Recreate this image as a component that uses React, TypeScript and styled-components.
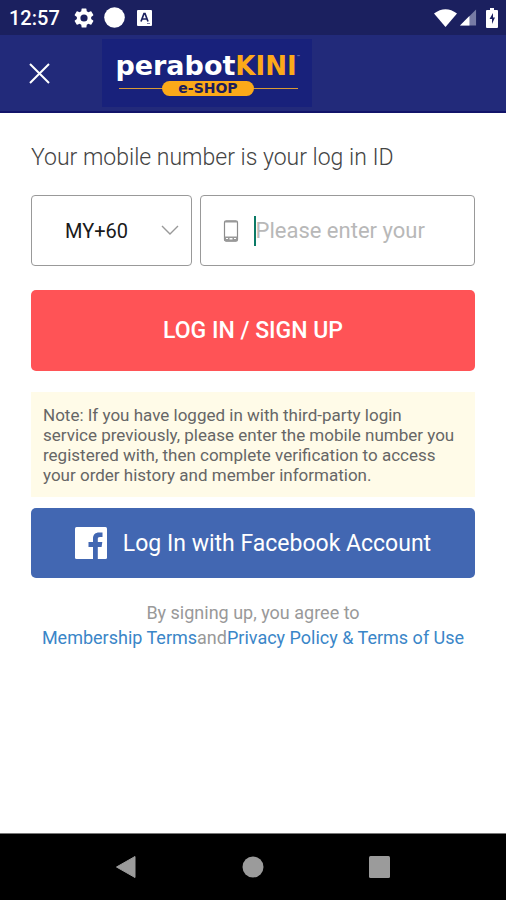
import React from "react";
import styled, { createGlobalStyle } from "styled-components";

const GlobalStyle = createGlobalStyle`
  *, *::before, *::after { box-sizing: border-box; }
  body { margin: 0; background: #fff; font-family: Roboto, "Liberation Sans", sans-serif; }
  button, input, select { font-family: inherit; }
`;

const Screen = styled.div`
  display: flex;
  flex-direction: column;
  min-height: 100vh;
`;

const StatusBar = styled.div`
  display: flex;
  align-items: center;
  justify-content: space-between;
  height: 35px;
  padding: 0 8px 0 9px;
  background: #1b205f;
  color: #fff;
`;

const StatusGroup = styled.div<{ $gap: number }>`
  display: flex;
  align-items: center;
  gap: ${(p) => p.$gap}px;
`;

const Clock = styled.time`
  margin-right: 4px;
  font-size: 20px;
  font-weight: 500;
  line-height: 24px;
`;

const SignalIcon = styled.svg`
  margin-right: 6px;
`;

const Header = styled.header`
  display: flex;
  align-items: center;
  height: 78px;
  padding-left: 24px;
  gap: 47px;
  background: #222a7a;
  border-bottom: 2px solid #12146a;
`;

const CloseButton = styled.button`
  display: flex;
  align-items: center;
  justify-content: center;
  width: 31px;
  height: 32px;
  padding: 0;
  border: 0;
  background: none;
  color: #fff;
`;

const Logo = styled.div`
  display: flex;
  flex-direction: column;
  align-items: center;
  width: 210px;
  height: 68px;
  padding: 12px 0 0 2px;
  background: #18217b;
  font-family: "DejaVu Sans", sans-serif;
  font-weight: 700;
`;

const WordMark = styled.div`
  display: flex;
  align-items: baseline;
  color: #fff;
  font-size: 27px;
  line-height: 30px;
`;

const WordAccent = styled.span`
  color: #fba919;
  font-size: 26px;
`;

const TradeMark = styled.sup`
  align-self: flex-start;
  color: #8e95c8;
  font-size: 4px;
  line-height: 12px;
`;

const TagLine = styled.div`
  display: flex;
  align-items: center;
  width: 179px;

  &::before,
  &::after {
    content: "";
    flex: 1;
    height: 1px;
    background: #d99a35;
  }
`;

const Tag = styled.span`
  padding: 0 16px;
  border-radius: 8px;
  background: #fba919;
  color: #1c1c5c;
  font-size: 14px;
  line-height: 15px;
`;

const Main = styled.main`
  flex: 1;
  padding: 30px 31px 0;
`;

const Title = styled.h1`
  margin: 0 0 23px;
  color: #444;
  font-size: 23px;
  font-weight: 300;
  line-height: 29px;
`;

const FieldRow = styled.div`
  display: flex;
  gap: 8px;
  margin-bottom: 24px;
`;

const Field = styled.div<{ $grow: number }>`
  position: relative;
  display: flex;
  align-items: center;
  flex: ${(p) => p.$grow} 1 0;
  min-width: 0;
  height: 71px;
  border: 1px solid #999;
  border-radius: 4px;
`;

const CodeSelect = styled.select`
  width: 100%;
  height: 100%;
  padding: 0 40px 0 33px;
  border: 0;
  outline: 0;
  appearance: none;
  background: none;
  color: #1a1a1a;
  font-size: 20px;
`;

const Chevron = styled.svg`
  position: absolute;
  right: 12px;
  pointer-events: none;
`;

const PhoneIcon = styled.svg`
  flex: none;
  margin: 0 15px 0 22px;
`;

const Caret = styled.span`
  flex: none;
  width: 2px;
  height: 30px;
  background: #0b7a66;
`;

const PhoneInput = styled.input`
  flex: 1;
  min-width: 0;
  height: 100%;
  margin-right: 20px;
  padding: 0;
  border: 0;
  outline: 0;
  background: none;
  color: #1a1a1a;
  font-size: 22px;

  &::placeholder { color: #b8b8b8; opacity: 1; }
`;

const ActionButton = styled.button<{ $tone: "login" | "facebook" }>`
  display: flex;
  align-items: center;
  justify-content: center;
  gap: 16px;
  width: 100%;
  height: ${(p) => (p.$tone === "login" ? 81 : 70)}px;
  padding: 0;
  border: 0;
  border-radius: 5px;
  background: ${(p) => (p.$tone === "login" ? "#ff5356" : "#4267b2")};
  color: #fff;
  font-size: 23px;
  font-weight: ${(p) => (p.$tone === "login" ? 500 : 400)};
`;

const Note = styled.p`
  margin: 21px 0 11px;
  padding: 13px 18px 12px 12px;
  background: #fffbe8;
  color: #666;
  font-size: 17px;
  line-height: 20px;
`;

const Terms = styled.p`
  margin: 22px 0 0;
  color: #999;
  font-size: 18px;
  line-height: 25px;
  text-align: center;
`;

const TermsLine = styled.span`
  display: block;
  white-space: nowrap;
`;

const TermsLink = styled.a`
  color: #3a86c8;
  text-decoration: none;
`;

const NavBar = styled.nav`
  display: flex;
  align-items: center;
  justify-content: center;
  gap: 95px;
  height: 67px;
  border-top: 1px solid #777;
  background: #000;
`;

const NavButton = styled.button`
  display: flex;
  width: 32px;
  height: 32px;
  padding: 4px;
  border: 0;
  background: none;
  color: #9b9b9b;
`;

export default function App() {
  return (
    <>
      <GlobalStyle />
      <Screen>
        <StatusBar>
          <StatusGroup $gap={10}>
            <Clock>12:57</Clock>
            <svg width="20" height="20" viewBox="2 2 20 20" fill="currentColor" aria-hidden="true">
              <path d="M19.14 12.94c.04-.3.06-.61.06-.94s-.02-.64-.07-.94l2.03-1.58a.49.49 0 0 0 .12-.61l-1.92-3.32a.49.49 0 0 0-.59-.22l-2.39.96a7 7 0 0 0-1.62-.94l-.36-2.54a.48.48 0 0 0-.48-.41h-3.84a.48.48 0 0 0-.47.41l-.36 2.54c-.59.24-1.13.57-1.62.94l-2.39-.96a.48.48 0 0 0-.59.22L2.74 8.87a.48.48 0 0 0 .12.61l2.03 1.58a7 7 0 0 0 0 1.88l-2.03 1.58a.49.49 0 0 0-.12.61l1.92 3.32c.12.22.37.29.59.22l2.39-.96c.5.38 1.03.7 1.62.94l.36 2.54c.05.24.24.41.48.41h3.84c.24 0 .44-.17.47-.41l.36-2.54a7 7 0 0 0 1.62-.94l2.39.96c.22.08.47 0 .59-.22l1.92-3.32a.48.48 0 0 0-.12-.61zM12 15.6a3.6 3.6 0 1 1 0-7.2 3.6 3.6 0 0 1 0 7.2z" />
            </svg>
            <svg width="21" height="21" viewBox="0 0 21 21" aria-hidden="true">
              <circle cx="10.500" cy="10.500" r="10.300" fill="currentColor" />
            </svg>
            <svg width="19" height="18" viewBox="0 0 19 18" aria-hidden="true">
              <rect x="2" y="1" width="15" height="16" rx="1" fill="#fff" />
              <path d="M6 12.500 9 4.500h1l3 8M7 10h5" fill="none" stroke="#1b205f" strokeWidth="1.700" />
              <path d="M12 14.500h3" stroke="#7d80a5" />
            </svg>
          </StatusGroup>
          <StatusGroup $gap={3}>
            <svg width="23" height="18" viewBox="0 0 23 18" aria-hidden="true">
              <path d="M0 4.500Q11.500-4 23 4.500L11.500 18Z" fill="#fff" />
            </svg>
            <SignalIcon width="17" height="17" viewBox="0 0 18 17" aria-hidden="true">
              <path d="M17 0v17H0Z" fill="#777ba5" />
              <path d="M10 7v10H0Z" fill="#fff" />
            </SignalIcon>
            <svg width="12" height="20" viewBox="0 0 12 20" aria-hidden="true">
              <path d="M1 2h3V0h4v2h3q1 0 1 1v16q0 1-1 1H1q-1 0-1-1V3q0-1 1-1Z" fill="#fff" />
              <path d="M7 5 3.500 11H6v5l3-6.500H7Z" fill="#1b205f" />
            </svg>
          </StatusGroup>
        </StatusBar>

        <Header>
          <CloseButton type="button" aria-label="Close">
            <svg width="21" height="21" viewBox="0 0 21 21" fill="none" stroke="currentColor" strokeWidth="2" aria-hidden="true">
              <path d="m1 1 19 19M20 1 1 20" />
            </svg>
          </CloseButton>
          <Logo>
            <WordMark>
              perabot<WordAccent>KINI</WordAccent>
              <TradeMark>™</TradeMark>
            </WordMark>
            <TagLine>
              <Tag>e-SHOP</Tag>
            </TagLine>
          </Logo>
        </Header>

        <Main>
          <Title>Your mobile number is your log in ID</Title>
          <FieldRow>
            <Field $grow={160}>
              <CodeSelect aria-label="Country code" defaultValue="60">
                <option value="60">MY+60</option>
              </CodeSelect>
              <Chevron width="18" height="11" viewBox="0 0 18 11" fill="none" stroke="#999" strokeWidth="1.400" aria-hidden="true">
                <path d="m1 1 8 8 8-8" />
              </Chevron>
            </Field>
            <Field $grow={276}>
              <PhoneIcon width="16" height="22" viewBox="0 0 16 22" aria-hidden="true">
                <rect x="1.500" y="0.800" width="13" height="20.400" rx="1.800" fill="none" stroke="#8c8c8c" strokeWidth="1.200" />
                <path d="M1.500 16.500h13v3.500q0 1.200-1.200 1.200H2.700q-1.200 0-1.200-1.200ZM1.500 1h13v1.500h-13Z" fill="#999" />
                <path d="M6.500 18h3v1.500h-3ZM3 18h2v1H3ZM11 18h2v1h-2Z" fill="#fff" />
              </PhoneIcon>
              <Caret />
              <PhoneInput type="tel" aria-label="Mobile number" placeholder="Please enter your" />
            </Field>
          </FieldRow>
          <ActionButton type="button" $tone="login">LOG IN / SIGN UP</ActionButton>
          <Note>
            Note: If you have logged in with third-party login service previously, please enter the
            mobile number you registered with, then complete verification to access your order
            history and member information.
          </Note>
          <ActionButton type="button" $tone="facebook">
            <svg width="32" height="32" viewBox="0 0 32 32" aria-hidden="true">
              <rect width="32" height="32" rx="1.500" fill="#fff" />
              <path d="M18 32V20h-4.500v-5H18v-3.500C18 7.500 20.500 5.500 24 5.500h3.500V10H25c-1.800 0-2.200.8-2.200 2.300V15h4.500l-.7 5h-3.800v12Z" fill="#4267b2" />
            </svg>
            Log In with Facebook Account
          </ActionButton>
          <Terms>
            <TermsLine>By signing up, you agree to</TermsLine>
            <TermsLine>
              <TermsLink href="#membership-terms">Membership Terms</TermsLink>and
              <TermsLink href="#privacy-policy">Privacy Policy &amp; Terms of Use</TermsLink>
            </TermsLine>
          </Terms>
        </Main>

        <NavBar aria-label="System navigation">
          <NavButton type="button" aria-label="Back">
            <svg width="24" height="24" viewBox="0 0 24 24" aria-hidden="true">
              <path d="M2.500 12 21 1.500v21Z" fill="currentColor" stroke="currentColor" strokeLinejoin="round" />
            </svg>
          </NavButton>
          <NavButton type="button" aria-label="Home">
            <svg width="24" height="24" viewBox="0 0 24 24" aria-hidden="true">
              <circle cx="12" cy="12" r="10.500" fill="currentColor" />
            </svg>
          </NavButton>
          <NavButton type="button" aria-label="Recent apps">
            <svg width="24" height="24" viewBox="0 0 24 24" aria-hidden="true">
              <rect x="1" y="1" width="21" height="22" rx="1.500" fill="currentColor" />
            </svg>
          </NavButton>
        </NavBar>
      </Screen>
    </>
  );
}
